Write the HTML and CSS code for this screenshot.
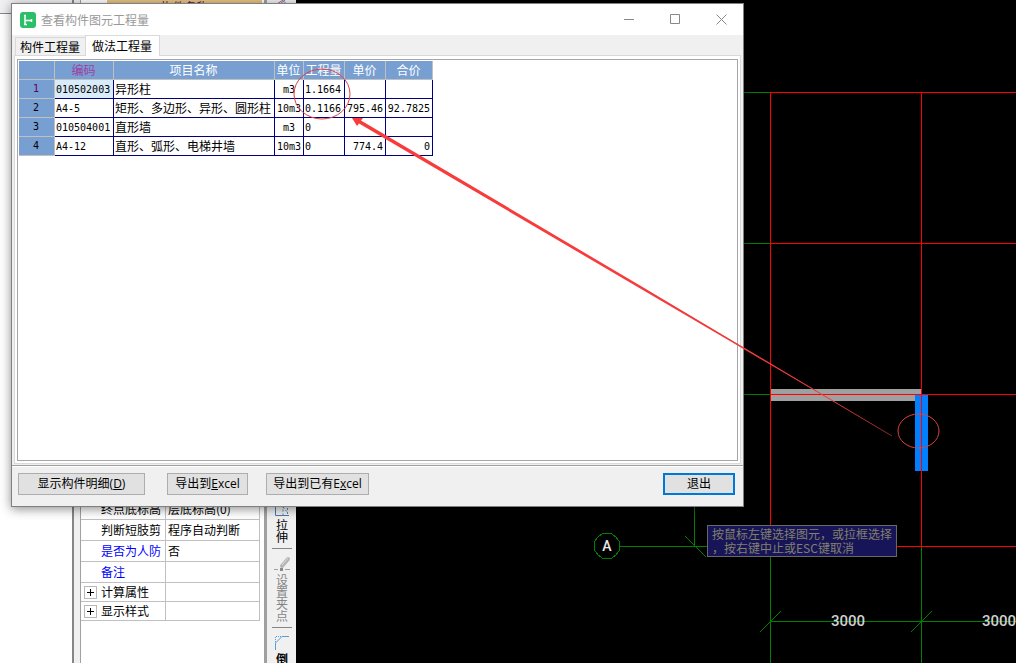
FILE: index.html
```html
<!DOCTYPE html>
<html lang="zh-CN">
<head>
<meta charset="utf-8">
<title>查看构件图元工程量</title>
<link rel="stylesheet" href="styles.css">
</head>
<body>
<div class="app">
  <aside class="left-panel"><div class="left-head"></div></aside>
  <section class="props">
    <div class="props-head"><span class="props-name">构件名称</span></div>
    <table class="props-table">
      <tbody>
        <tr><th scope="row">终点底标高</th><td>层底标高(0)</td></tr>
        <tr><th scope="row">判断短肢剪</th><td>程序自动判断</td></tr>
        <tr class="blue"><th scope="row">是否为人防</th><td>否</td></tr>
        <tr class="blue"><th scope="row">备注</th><td></td></tr>
        <tr class="group"><th scope="row"><div class="group-name"><button class="expand" aria-label="展开计算属性"></button>计算属性</div></th><td></td></tr>
        <tr class="group"><th scope="row"><div class="group-name"><button class="expand" aria-label="展开显示样式"></button>显示样式</div></th><td></td></tr>
      </tbody>
    </table>
  </section>
  <nav class="tools">
    <svg class="tool-peek" width="16" height="4" viewBox="0 0 16 4"><path d="M3 4L9 0M6 4L11 0" stroke="#b0508c" stroke-width="1"/><path d="M8 0l5 4" stroke="#6a94b8"/></svg>
    <button class="tool">
      <svg width="16" height="16" viewBox="0 0 16 16" fill="none"><path d="M1.500 0V14.500H15" stroke="#4a78b0"/><path d="M1 4.500h8v10M9 6l5 6M13.500 3v10" stroke="#5a82b4" stroke-dasharray="2 2"/></svg>
      <span>拉伸</span>
    </button>
    <button class="tool dim">
      <svg width="18" height="16" viewBox="0 0 18 16" fill="none"><path d="M9 10L15 3" stroke="#b4b4b4" stroke-width="4" stroke-linecap="round"/><path d="M9 9L15 2" stroke="#dcdcdc" stroke-width="1"/><path d="M1 13.500h4M12 13.500h5" stroke="#a0a0a0"/><path d="M7 12h3v3H7z" fill="#888"/></svg>
      <span>设置夹点</span>
    </button>
    <button class="tool">
      <svg width="16" height="16" viewBox="0 0 16 16" fill="none"><path d="M1.500 15V8L8 1.500H15" stroke="#5a9fd4"/><path d="M1.500 7V1.500H8" stroke="#5a9fd4" stroke-dasharray="1 1"/></svg>
      <span class="strong">倒</span>
    </button>
  </nav>
  <main class="canvas">
    <svg class="drawing" width="100%" height="100%" shape-rendering="crispEdges" fill="none">
      <g transform="translate(-296 0)">
        <path d="M770 389h152v12H770z" fill="#a0a0a0"/>
        <path d="M915 395h13v76h-13z" fill="#0080ff"/>
        <path class="green" d="M744 92.500h26M744 243.500h26M744 394.500h26M620 546.500h280M694.500 500v46M770.500 546v400M921.500 546v400M770 621.500h1800"/>
        <path class="green" d="M685 536l21 21M760 632l21-21M911 632l21-21"/>
        <path class="red" d="M770 92.500h1800M770 243.500h1800M770 394.500h1800M770 546.500h1800M770.500 92v454M921.500 92v454"/>
        <path class="green" d="M594 546l1-5 3-4 4-3 5-1 5 1 4 3 3 4 1 5-1 5-3 4-4 3-5 1-5-1-4-3-3-4z"/>
        <text class="axis" x="607" y="551">A</text>
        <text class="dim-text" x="848" y="626">3000</text>
        <text class="dim-text" x="999" y="626">3000</text>
      </g>
    </svg>
    <div class="hint">按鼠标左键选择图元，或拉框选择<br>，按右键中止或ESC键取消</div>
  </main>
</div>

<div class="dialog" role="dialog" aria-labelledby="dialog-title">
  <header class="titlebar">
    <svg class="logo" width="16" height="16" viewBox="0 0 16 16"><rect width="16" height="16" rx="3" fill="#2bbf68"/><path d="M4 3.500h2M5 3v10M4 12.500h3M5 8.500h6M11.500 7v3" stroke="#fff" stroke-width="1.500" fill="none"/></svg>
    <span class="title" id="dialog-title">查看构件图元工程量</span>
    <div class="winctl">
      <button aria-label="最小化"><svg width="11" height="11"><path d="M0 5.500h10" stroke="#888"/></svg></button>
      <button aria-label="最大化"><svg width="11" height="11"><path d="M.5.500h9v9h-9z" stroke="#888" fill="none"/></svg></button>
      <button aria-label="关闭"><svg width="11" height="11"><path d="M.5.500l10 10M10.500.500l-10 10" stroke="#888"/></svg></button>
    </div>
  </header>
  <div class="body">
    <div class="tabs" role="tablist">
      <button class="tab" role="tab">构件工程量</button>
      <button class="tab active" role="tab" aria-selected="true">做法工程量</button>
    </div>
    <div class="pane">
      <div class="sheet">
        <table class="grid">
          <colgroup><col class="c-no"><col class="c-code"><col class="c-name"><col class="c-unit"><col class="c-qty"><col class="c-price"><col class="c-total"></colgroup>
          <thead><tr><th></th><th class="key">编码</th><th>项目名称</th><th>单位</th><th>工程量</th><th>单价</th><th>合价</th></tr></thead>
          <tbody>
            <tr><th class="current">1</th><td class="num selected">010502003</td><td>异形柱</td><td class="num center">m3</td><td class="num">1.1664</td><td></td><td></td></tr>
            <tr><th>2</th><td class="num">A4-5</td><td>矩形、多边形、异形、圆形柱</td><td class="num center">10m3</td><td class="num">0.1166</td><td class="num right">795.46</td><td class="num right">92.7825</td></tr>
            <tr><th>3</th><td class="num">010504001</td><td>直形墙</td><td class="num center">m3</td><td class="num">0</td><td></td><td></td></tr>
            <tr><th>4</th><td class="num">A4-12</td><td>直形、弧形、电梯井墙</td><td class="num center">10m3</td><td class="num">0</td><td class="num right">774.4</td><td class="num right">0</td></tr>
          </tbody>
        </table>
      </div>
    </div>
  </div>
  <footer class="footer">
    <button class="btn wide">显示构件明细(<u>D</u>)</button>
    <button class="btn">导出到<u>E</u>xcel</button>
    <button class="btn medium">导出到已有E<u>x</u>cel</button>
    <button class="btn exit">退出</button>
  </footer>
</div>

<svg class="marks" width="100%" height="100%" fill="none" stroke="#e04040">
  <ellipse cx="322" cy="94" rx="28" ry="25"/>
  <ellipse cx="918.500" cy="431" rx="20.500" ry="17"/>
  <path d="M352 118L363 118L361 120.500L640 285.500L892 436L638.500 287.500L359 123.500L357 126Z" fill="#f83c3c" stroke="none"/>
  <path d="M640 286.500L892 436" stroke-opacity=".6"/>
</svg>
</body>
</html>
```

FILE: styles.css
```css
* { box-sizing: border-box; }

body {
  margin: 0;
  height: 100vh;
  overflow: hidden;
  position: relative;
  background: #fff;
  color: #000;
  font: 12px/14px "Noto Sans CJK SC", sans-serif;
}

button {
  margin: 0;
  padding: 0;
  border: 0;
  background: none;
  color: inherit;
  font: inherit;
}

table { border-collapse: separate; border-spacing: 0; table-layout: fixed; }
th { font-weight: 400; }
svg { display: block; }

.app {
  display: grid;
  grid-template-columns: 74px 193px 29px 1fr;
  height: 100%;
}

.left-panel { border-right: 2px solid #85858a; background: #fff; }
.left-head { height: 14px; background: #f0f0f2; border-bottom: 1px solid #85858a; }

.props {
  margin-left: 6px;
  border-left: 1px solid #a0a0a5;
  border-right: 3px solid #a0a0a0;
  box-shadow: -6px 0 #f0f0f0;
  overflow: hidden;
}
.props-head {
  height: 4px;
  margin: 0 2px 0 26px;
  overflow: hidden;
  background: #e6c383;
  text-align: center;
  color: #5a1050;
}
.props-name { display: block; }
.props-table { width: 179px; margin-top: 495px; }
.props-table th,
.props-table td {
  height: 21px;
  padding: 0 0 0 2px;
  border-right: 1px solid #c0c0c0;
  border-bottom: 1px solid #c0c0c0;
  text-align: left;
  white-space: nowrap;
}
.props-table th { width: 85px; padding-left: 20px; }
.props-table .blue th { color: #00f; }
.props-table .group th,
.props-table .group td { height: 19px; }
.props-table .group th { padding-left: 3px; }
.group-name { display: flex; align-items: center; gap: 4px; }
.expand {
  width: 13px;
  height: 13px;
  border: 1px solid #b8b8b8;
  background:
    linear-gradient(#000, #000) center / 7px 1px no-repeat,
    linear-gradient(#000, #000) center / 1px 7px no-repeat,
    #fff;
}

.tools {
  display: flex;
  flex-direction: column;
  background: #f0f0f0;
  padding: 0 4px 0 5px;
  overflow: hidden;
}
.tool-peek { margin: 0 0 497px 2px; flex: none; }
.tool {
  display: flex;
  flex-direction: column;
  align-items: center;
  gap: 2px;
  flex: none;
  padding-bottom: 5px;
  margin-bottom: 7px;
  border-bottom: 1px solid #858585;
  line-height: 12px;
}
.tool span { width: 12px; overflow-wrap: anywhere; }
.tool.dim { color: #858585; }
.strong { font-weight: 700; }

.canvas { position: relative; background: #000; overflow: hidden; }
.drawing { position: absolute; inset: 0; }
.green { stroke: #008000; }
.red { stroke: #f00; }
.axis, .dim-text {
  fill: #d0d0d0;
  font: 500 15px Roboto, sans-serif;
  text-anchor: middle;
}
.axis { font-size: 14px; fill: #e8e8e8; }
.hint {
  position: absolute;
  left: 411px;
  top: 525px;
  padding: 1px 4px;
  border: 1px solid #686868;
  background: #181458;
  color: #80806c;
  line-height: 14px;
  white-space: nowrap;
}

.dialog {
  position: absolute;
  left: 11px;
  top: 3px;
  width: 733px;
  height: 504px;
  display: flex;
  flex-direction: column;
  border: 1px solid #808080;
  background: #f0f0f0;
  box-shadow: 0 2px 10px rgba(0, 0, 0, .45);
}
.titlebar {
  display: flex;
  align-items: center;
  height: 31px;
  padding: 0 8px;
  background: #fff;
  color: #999;
}
.logo { flex: none; }
.title { margin-left: 5px; }
.winctl { display: flex; gap: 35px; margin-left: auto; padding-right: 8px; }

.body { flex: 1; display: flex; flex-direction: column; padding: 0 2px 1px; }
.tabs { display: flex; align-items: flex-end; height: 20px; padding-left: 1px; }
.tab {
  height: 18px;
  padding: 0 5px 0 4px;
  border: 1px solid #d9d9d9;
  border-bottom: 0;
}
.tab.active {
  height: 21px;
  padding: 0 7px 1px 6px;
  margin: 0 0 -1px -1px;
  background: #fff;
  z-index: 1;
}
.pane {
  flex: 1;
  display: flex;
  padding: 3px 2px 2px;
  border: 1px solid #d9d9d9;
  background: #fff;
}
.sheet { flex: 1; padding: 1px; border: 1px solid #a5a5ab; }

.grid { width: 414px; }
.c-no { width: 36px; }
.c-code { width: 59px; }
.c-name { width: 161px; }
.c-unit { width: 29px; }
.c-qty, .c-price { width: 41px; }
.c-total { width: 47px; }
.grid th, .grid td {
  height: 19px;
  padding: 0 1px;
  border-right: 1px solid navy;
  border-bottom: 1px solid navy;
  text-align: left;
  white-space: nowrap;
}
.grid th {
  padding: 0 1px 0 0;
  background: #779fd2;
  border-color: #c0c0c0;
  text-align: center;
}
.grid thead th { color: #fff; }
.grid thead .key { color: #a040a0; }
.grid tbody th, .grid .num { font: 10px/14px "DejaVu Sans Mono", monospace; }
.grid .num { padding: 1px 1px 0; }
.grid .current { color: #600060; }
.grid .selected { background: #d9ebf9; }
.grid .center { text-align: center; }
.grid .right { text-align: right; padding-right: 2px; }

.footer {
  display: flex;
  align-items: center;
  height: 41px;
  padding: 0 8px 4px 6px;
  border-top: 1px solid #a0a0a0;
  box-shadow: inset 0 1px #fff;
}
.btn {
  width: 81px;
  height: 22px;
  margin-right: 18px;
  border: 1px solid #adadad;
  background: #e1e1e1;
  font-family: "Open Sans", "Noto Sans CJK SC", sans-serif;
  white-space: nowrap;
}
.btn.wide { width: 127px; margin-right: 22px; }
.btn.medium { width: 103px; }
.btn.exit { width: 72px; margin: 0 0 0 auto; border: 2px solid #0078d7; }

.marks { position: absolute; inset: 0; pointer-events: none; }
```
